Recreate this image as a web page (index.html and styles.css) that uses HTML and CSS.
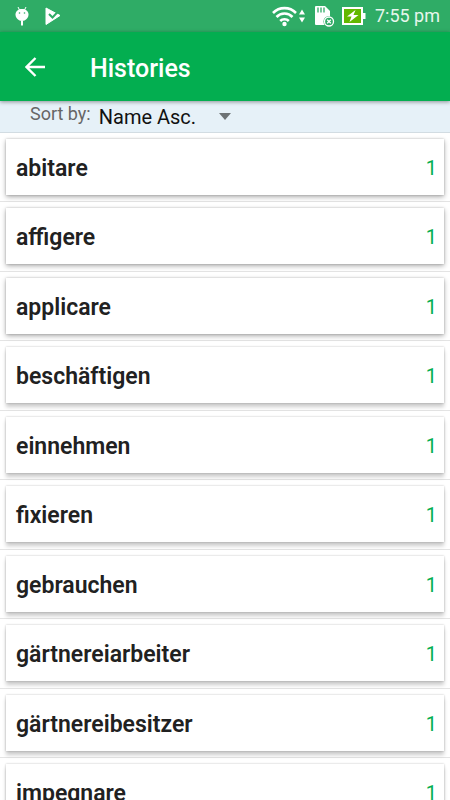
FILE: index.html
```html
<!DOCTYPE html>
<html lang="en">
<head>
<meta charset="utf-8">
<meta name="viewport" content="width=device-width, initial-scale=1">
<title>Histories</title>
<link rel="stylesheet" href="styles.css">
</head>
<body>
<div class="status">
  <svg class="droid" width="16" height="20" viewBox="0 0 16 20" aria-hidden="true">
    <path d="M4 1l2 4M12 1l-2 4" stroke="#fff" stroke-width="1"/>
    <path d="M1.500 8.500C1.500 5 4.500 3 8 3s6.500 2 6.500 5.500S11.500 15 8 15 1.500 12 1.500 8.500z" fill="#fff"/>
    <path d="M7 15h2v4.500H7z" fill="#fff"/>
    <circle cx="5.500" cy="7" r=".8" fill="#2fac66"/><circle cx="10.500" cy="7" r=".8" fill="#2fac66"/>
  </svg>
  <svg width="18" height="18" viewBox="0 0 18 18" aria-hidden="true">
    <path d="M2 1l14 7.500L2 17.500z" fill="#fff" stroke="#fff" stroke-linejoin="round"/>
    <path d="M5 7l3.500 3.500L15 3.500" fill="none" stroke="#2fac66" stroke-width="2"/>
  </svg>
  <div class="system">
    <svg width="34" height="22" viewBox="0 0 34 22" aria-hidden="true">
      <g fill="none" stroke="#fff" stroke-width="2.600">
        <path d="M1 8a16 16 0 0 1 23 0"/><path d="M4.500 12a11 11 0 0 1 16 0"/><path d="M8.200 16a6 6 0 0 1 8.600 0"/>
      </g>
      <circle cx="12.500" cy="19" r="2.200" fill="#fff"/>
      <path d="M27 9.500l3-5 3 5zM27 12.500h6l-3 5z" fill="#fff"/>
    </svg>
    <svg width="22" height="22" viewBox="0 0 22 22" aria-hidden="true">
      <path d="M3 1h9l5 5v14H3a1 1 0 0 1-1-1V2a1 1 0 0 1 1-1z" fill="#fff"/>
      <path d="M5 2.500v5M8 2.500v5M11 2.500v5" stroke="#2fac66" stroke-width="1.300"/>
      <circle cx="16" cy="16.500" r="5.500" fill="#2fac66"/>
      <circle cx="16" cy="16.500" r="4.500" fill="none" stroke="#fff" stroke-width="1.300"/>
      <path d="M14.200 14.700l3.600 3.600M17.800 14.700l-3.600 3.600" stroke="#fff" stroke-width="1.300"/>
    </svg>
    <svg width="24" height="18" viewBox="0 0 24 18" aria-hidden="true">
      <path d="M1 1h19v16H1z" fill="#62b800" stroke="#fff" stroke-width="2"/>
      <path d="M21 6h2.500v6H21z" fill="#fff"/>
      <path d="M13.500 3L5 9.500h4.500L7.500 15l9-7h-5z" fill="#fff"/>
    </svg>
    <time>7:55 pm</time>
  </div>
</div>
<header class="appbar">
  <button class="back" type="button" aria-label="Back">
    <svg width="20" height="20" viewBox="0 0 20 20" aria-hidden="true"><path d="M20 10H1.500M10.500 1L1.500 10l9 9" fill="none" stroke="#fff" stroke-width="2.400"/></svg>
  </button>
  <h1>Histories</h1>
</header>
<main>
  <div class="sort">
    <label for="sort">Sort by:</label>
    <div class="picker">
      <select id="sort"><option>Name Asc.</option></select>
      <svg width="12" height="7" viewBox="0 0 12 7" aria-hidden="true"><path d="M0 0h12L6 7z" fill="#6d7375"/></svg>
    </div>
  </div>
  <ul class="list">
    <li><a href="#"><b>abitare</b><span>1</span></a></li>
    <li><a href="#"><b>affigere</b><span>1</span></a></li>
    <li><a href="#"><b>applicare</b><span>1</span></a></li>
    <li><a href="#"><b>beschäftigen</b><span>1</span></a></li>
    <li><a href="#"><b>einnehmen</b><span>1</span></a></li>
    <li><a href="#"><b>fixieren</b><span>1</span></a></li>
    <li><a href="#"><b>gebrauchen</b><span>1</span></a></li>
    <li><a href="#"><b>gärtnereiarbeiter</b><span>1</span></a></li>
    <li><a href="#"><b>gärtnereibesitzer</b><span>1</span></a></li>
    <li><a href="#"><b>impegnare</b><span>1</span></a></li>
  </ul>
</main>
</body>
</html>
```
FILE: styles.css
```css
* { box-sizing: border-box; }
body {
  margin: 0;
  height: 100vh;
  display: flex;
  flex-direction: column;
  overflow: hidden;
  font-family: Roboto, sans-serif;
  background: #fff;
}
svg { display: block; flex: none; }
.status {
  flex: none;
  height: 32px;
  display: flex;
  align-items: center;
  gap: 14px;
  padding: 0 10px 0 14px;
  background: #2fac66;
  color: #fff;
}
.system {
  margin-left: auto;
  display: flex;
  align-items: center;
  gap: 7px;
}
.system time {
  margin-left: 2px;
  font-size: 18px;
  line-height: 32px;
  color: #e6f6ec;
}
.appbar {
  position: relative;
  z-index: 1;
  flex: none;
  height: 69px;
  display: flex;
  align-items: center;
  padding: 0 16px;
  background: #03ae50;
  color: #fff;
  box-shadow: 0 1px 4px rgba(0, 0, 0, .4);
}
.back {
  width: 38px;
  height: 40px;
  display: grid;
  place-items: center;
  padding: 0;
  border: 0;
  background: none;
}
.appbar h1 {
  margin: 4px 0 0 36px;
  font-size: 25px;
  line-height: 32px;
  font-weight: 500;
}
main {
  flex: 1;
  min-height: 0;
  overflow: hidden;
}
.sort {
  height: 32px;
  display: flex;
  gap: 8px;
  padding-left: 30px;
  background: #e6f1f8;
  border-bottom: 1px solid #d2dce2;
}
.sort label {
  font-size: 18px;
  line-height: 26px;
  color: #666;
}
.picker {
  display: flex;
  align-items: center;
}
.picker select {
  appearance: none;
  width: 120px;
  height: 32px;
  padding: 0;
  border: 0;
  background: none;
  font: 20px/32px Roboto, sans-serif;
  color: #111;
}
.list {
  margin: 0;
  padding: 0;
  list-style: none;
}
.list li {
  padding: 6px;
  border-bottom: 1px solid #e4e4e4;
}
.list li:nth-child(even) { padding-bottom: 7px; }
.list a {
  height: 56px;
  display: flex;
  align-items: center;
  justify-content: space-between;
  padding: 2px 7px 0 10px;
  background: #fff;
  box-shadow: 0 2px 5px rgba(0, 0, 0, .32), 0 0 2px rgba(0, 0, 0, .2);
  text-decoration: none;
  color: #212121;
}
.list li:nth-child(n+4) a {
  box-shadow: 0 4px 4px rgba(0, 0, 0, .2), 0 0 2px rgba(0, 0, 0, .25);
}
.list b {
  padding-top: 2px;
  font-size: 23px;
  line-height: 30px;
  font-weight: 600;
}
.list span {
  font-size: 20px;
  line-height: 30px;
  color: #03ae50;
}
```
